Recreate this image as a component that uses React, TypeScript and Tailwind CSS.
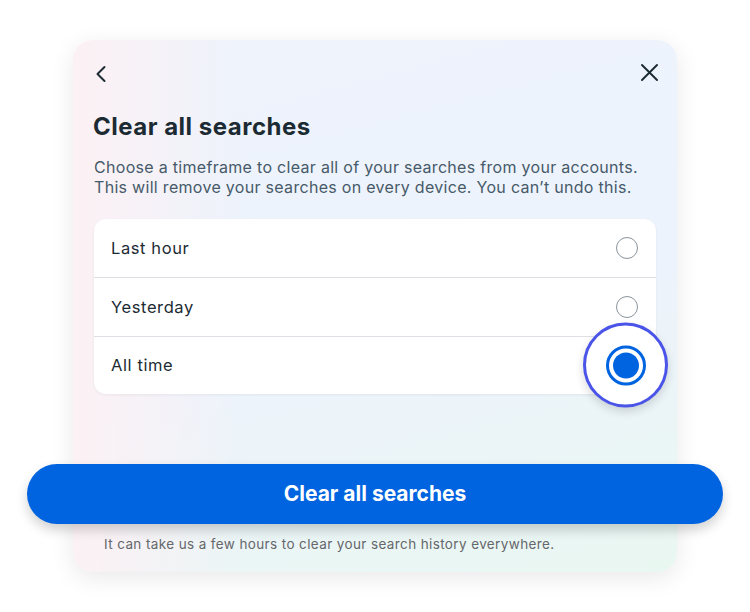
const options = ["Last hour", "Yesterday", "All time"];

function Radio({ checked }: { checked: boolean }) {
  if (checked) {
    return (
      <span className="flex h-[40px] w-[40px] items-center justify-center rounded-full border-[3px] border-[#0064e0] bg-white">
        <span className="h-[26px] w-[26px] rounded-full bg-[#0064e0]" />
      </span>
    );
  }
  return <span className="h-[22px] w-[22px] rounded-full border-[1.5px] border-[#8a949c] bg-white" />;
}

export default function App() {
  const selected = "All time";

  return (
    <div className="relative flex h-[612px] w-[750px] justify-center bg-white pt-[40px] font-['Inter','Noto_Sans',sans-serif] text-[#1c2b33]">
      <div className="relative flex h-[532px] w-[604px] flex-col rounded-[20px] bg-[linear-gradient(90deg,#fcf1f4_0%,rgba(238,243,252,0)_28%),linear-gradient(165deg,#eef3fc_0%,#edf3fc_55%,#e9f7f1_100%)] px-[21px] shadow-[0_6px_24px_rgba(0,0,0,0.09)]">
        {/* Header: back + close */}
        <div className="mt-[25px] flex h-[18px] items-center justify-between">
          <svg className="ml-[1px]" width="12" height="18" viewBox="0 0 12 18" fill="none" stroke="#1c2b33" strokeWidth="2" strokeLinecap="round" strokeLinejoin="round">
            <polyline points="9.5,2 2.5,9 9.5,16" />
          </svg>
          <svg className="mr-[-3px] mt-[-3px]" width="19" height="19" viewBox="0 0 19 19" fill="none" stroke="#1c2b33" strokeWidth="2" strokeLinecap="round">
            <line x1="2" y1="2" x2="17" y2="17" />
            <line x1="17" y1="2" x2="2" y2="17" />
          </svg>
        </div>

        <h1 className="ml-[-1px] mt-[30px] text-[24px] font-bold leading-[28px] tracking-[0.5px]">Clear all searches</h1>
        <p className="mt-[16px] text-[16px] leading-[20px] tracking-[0.3px] text-[#465a69]">
          Choose a timeframe to clear all of your searches from your accounts.
          <br />
          This will remove your searches on every device. You can’t undo this.
        </p>

        {/* Timeframe options */}
        <div className="mt-[22px] rounded-[12px] bg-white shadow-[0_1px_3px_rgba(0,0,0,0.06)]">
          {options.map((opt, i) => (
            <div
              key={opt}
              className={`relative flex h-[58.3px] items-center justify-between pl-[17px] pr-[18px] ${
                i > 0 ? "border-t border-[#dde1e5]" : ""
              }`}
            >
              <span className="text-[16.5px] tracking-[0.6px]">{opt}</span>
              {opt === selected ? (
                <span className="absolute right-[-12px] top-1/2 flex h-[85px] w-[85px] -translate-y-1/2 items-center justify-center rounded-full border-[3px] border-[#4a54e8] bg-white shadow-[0_4px_10px_rgba(0,0,0,0.15)]">
                  <Radio checked />
                </span>
              ) : (
                <Radio checked={false} />
              )}
            </div>
          ))}
        </div>

        {/* Primary action, breaks out of the card */}
        <button
          type="button"
          className="mx-[-67px] mt-[70px] h-[60px] shrink-0 rounded-full bg-[#0064e0] text-[21px] font-bold text-white shadow-[0_6px_12px_rgba(0,0,0,0.18)]"
        >
          Clear all searches
        </button>

        <p className="mt-[11px] pl-[10px] text-[13.5px] leading-[18px] tracking-[0.38px] text-[#65676b]">
          It can take us a few hours to clear your search history everywhere.
        </p>
      </div>
    </div>
  );
}
